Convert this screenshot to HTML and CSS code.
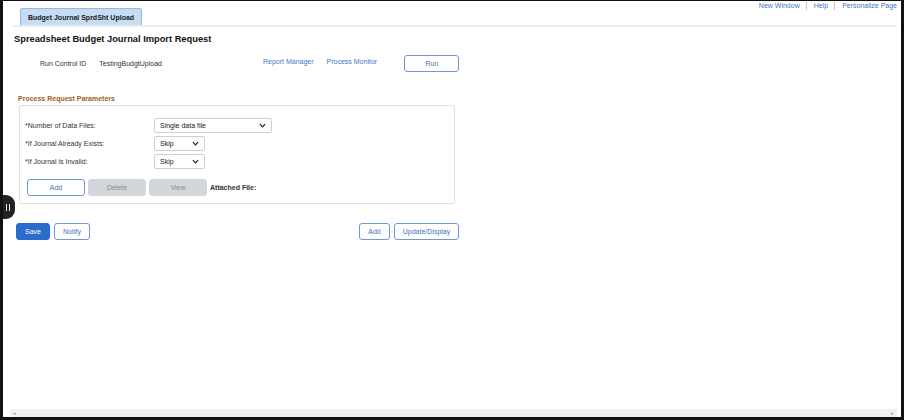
FILE: index.html
```html
<!DOCTYPE html>
<html>
<head>
<meta charset="utf-8">
<link rel="stylesheet" href="styles.css">
</head>
<body>
<div class="frame">
  <div class="topbar">
    <div class="tab">Budget Journal SprdSht Upload</div>
    <div class="toplinks">
      <a class="tl">New Window</a><span class="sep"></span><a class="tl">Help</a><span class="sep"></span><a class="tl">Personalize Page</a>
    </div>
  </div>
  <div class="tabline"></div>
  <div class="page">
    <h1 class="title">Spreadsheet Budget Journal Import Request</h1>
    <div class="runrow">
      <span class="rclabel">Run Control ID</span>
      <span class="rcvalue">TestingBudgtUpload</span>
      <a class="link rm">Report Manager</a>
      <a class="link pm">Process Monitor</a>
      <button class="btn run">Run</button>
    </div>
    <div class="section">Process Request Parameters</div>
    <div class="group">
      <div class="field">
        <span class="flabel">*Number of Data Files:</span>
        <div class="sel wide"><span>Single data file</span><svg class="chev" viewBox="0 0 8 5" width="7" height="5"><path d="M1 1 L4 4 L7 1" fill="none" stroke="#222" stroke-width="1.4"/></svg></div>
      </div>
      <div class="field">
        <span class="flabel">*If Journal Already Exists:</span>
        <div class="sel narrow"><span>Skip</span><svg class="chev" viewBox="0 0 8 5" width="7" height="5"><path d="M1 1 L4 4 L7 1" fill="none" stroke="#222" stroke-width="1.4"/></svg></div>
      </div>
      <div class="field">
        <span class="flabel">*If Journal is Invalid:</span>
        <div class="sel narrow"><span>Skip</span><svg class="chev" viewBox="0 0 8 5" width="7" height="5"><path d="M1 1 L4 4 L7 1" fill="none" stroke="#222" stroke-width="1.4"/></svg></div>
      </div>
      <div class="btnrow">
        <button class="btn gb">Add</button>
        <button class="btn gb dis">Delete</button>
        <button class="btn gb dis">View</button>
        <span class="attach">Attached File:</span>
      </div>
    </div>
    <div class="bottomrow">
      <button class="btn primary">Save</button>
      <button class="btn notify">Notify</button>
      <span class="spacer"></span>
      <button class="btn add2">Add</button>
      <button class="btn upd">Update/Display</button>
    </div>
  </div>
  <div class="hscroll"><span class="arr">&#9666;</span><span class="arr">&#9656;</span></div>
  <div class="handle"><span class="bar"></span><span class="bar"></span></div>
</div>
</body>
</html>
```
FILE: styles.css
```css
html, body { margin: 0; padding: 0; background: #fff; }
body { font-family: "Liberation Sans", Arial, sans-serif; font-size: 7px; color: #333; }
.frame {
  position: relative;
  width: 904px; height: 420px; box-sizing: border-box;
  border-style: solid; border-color: #111;
  border-width: 1px 3px 3px 3px;
  display: flex; flex-direction: column;
  overflow: hidden;
}
.topbar { display: flex; justify-content: space-between; align-items: flex-start; padding: 0 4px 0 17px; height: 24px; }
.tab {
  margin-top: 7px; height: 17px; box-sizing: border-box; width: 122px;
  background: #c5dcf3; border: 1px solid #94b8df; border-bottom: none;
  border-radius: 3px 3px 0 0;
  font-weight: bold; font-size: 7px; color: #1a1a1a;
  display: flex; align-items: center; justify-content: center;
}
.toplinks { display: flex; align-items: center; margin-top: 0; }
.tl { color: #4675c5; font-size: 7px; line-height: 9px; }
.sep { width: 1px; height: 8px; background: #d9c3be; margin: 0 7px 0 6px; }
.tabline { height: 2px; background: #ececec; margin: 0 4px 0 10px; }
.page { padding: 0 0 0 11px; }
.title { margin: 5px 0 0 0; font-size: 9.3px; font-weight: bold; color: #111; line-height: 14px; }
.runrow { display: flex; align-items: center; margin-top: 9px; height: 17px; }
.rclabel { margin-left: 26px; color: #333; font-size: 7px; }
.rcvalue { margin-left: 13px; color: #333; font-size: 7px; }
.link { color: #4675c5; font-size: 7px; position: relative; top: -2px; }
.rm { margin-left: 101px; }
.pm { margin-left: 13px; }
.btn {
  font-family: "Liberation Sans", Arial, sans-serif; font-size: 7px;
  background: #fff; color: #3f6fc2; border: 1px solid #6e98d8; border-radius: 3px;
  height: 17px; padding: 0; box-sizing: border-box; cursor: default;
}
.run { width: 55px; margin-left: 27px; }
.section { margin: 22px 0 0 4px; color: #a45d1c; font-weight: bold; font-size: 7px; line-height: 10px; }
.group {
  margin: 1px 0 0 5px; width: 436px; height: 99px; box-sizing: border-box;
  border: 1px solid #e0e0e0; border-radius: 2px; padding: 10px 0 0 5px;
}
.field { display: flex; align-items: center; height: 18px; }
.flabel { width: 129px; font-size: 7px; color: #333; }
.sel {
  height: 15px; box-sizing: border-box; border: 1px solid #cfcfcf; border-radius: 2px;
  display: flex; align-items: center; justify-content: space-between; padding: 0 5px 0 5px;
  font-size: 7px; color: #222;
}
.wide { width: 118px; }
.narrow { width: 51px; }
.btnrow { display: flex; align-items: center; margin-top: 9px; margin-left: 2px; }
.gb { width: 58px; margin-right: 3px; }
.dis { background: #d3d6da; border-color: #d3d6da; color: #888d93; }
.attach { margin-left: 0; font-weight: bold; font-size: 7px; color: #333; }
.bottomrow { display: flex; align-items: center; width: 443px; margin-top: 19px; margin-left: 2px; }
.primary { background: #2a6ccb; border-color: #2a6ccb; color: #fff; width: 34px; }
.notify { width: 36px; margin-left: 4px; }
.spacer { flex: 1; }
.add2 { width: 31px; }
.upd { width: 65px; margin-left: 4px; }
.hscroll {
  margin: auto 4px 0 7px; height: 8px; background: #f0f0f0;
  display: flex; justify-content: space-between; align-items: center;
  padding: 0 3px; color: #999; font-size: 5px;
}
.handle {
  position: absolute; left: -3px; top: 194px; width: 15px; height: 24px;
  background: #1f2326; border-radius: 0 9px 9px 0;
  display: flex; align-items: center; justify-content: center; gap: 2px;
}
.bar { width: 1px; height: 7px; background: #e8e8e8; }
```
